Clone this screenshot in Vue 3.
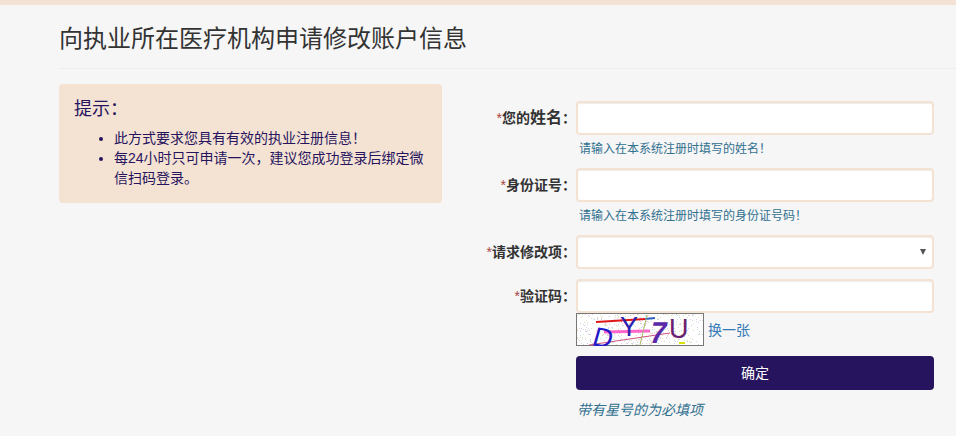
<script setup>
const fields = [
  { label: "您的", big: "姓名", hint: "请输入在本系统注册时填写的姓名！" },
  { label: "身份证号", hint: "请输入在本系统注册时填写的身份证号码！" },
];

// speckle for the captcha background, seeded so each run draws the same
const noiseColors = ["#cfe3c8", "#e6c8e6", "#c8d4ec", "#e8e2b8", "#d8d8d8"];
let seed = 7;
function next(max) {
  seed = (seed * 16807) % 2147483647;
  return seed % max;
}
const noise = Array.from({ length: 420 }, () => ({
  x: next(126),
  y: next(31),
  fill: noiseColors[next(noiseColors.length)],
}));
</script>

<template>
  <div class="page">
    <div class="top-bar"></div>
    <main class="content">
      <h3 class="title">向执业所在医疗机构申请修改账户信息</h3>
      <div class="columns">
        <aside class="tips">
          <h4>提示：</h4>
          <ul>
            <li>此方式要求您具有有效的执业注册信息！</li>
            <li>每24小时只可申请一次，建议您成功登录后绑定微信扫码登录。</li>
          </ul>
        </aside>

        <form class="form" @submit.prevent>
          <div v-for="field in fields" :key="field.hint" class="form-row with-hint">
            <label class="form-label">
              <span class="star">*</span>{{ field.label }}<span v-if="field.big" class="big">{{ field.big }}</span>：
            </label>
            <div class="form-control-wrap">
              <input class="form-control" type="text" />
              <p class="hint">{{ field.hint }}</p>
            </div>
          </div>

          <div class="form-row">
            <label class="form-label"><span class="star">*</span>请求修改项：</label>
            <div class="form-control-wrap select-wrap">
              <select class="form-control"></select>
            </div>
          </div>

          <div class="form-row captcha-row">
            <label class="form-label"><span class="star">*</span>验证码：</label>
            <div class="form-control-wrap">
              <input class="form-control" type="text" />
              <div class="captcha-line">
                <svg class="captcha" width="128" height="33" viewBox="0 0 128 33" aria-label="验证码图片">
                  <rect x="0.5" y="0.5" width="127" height="32" fill="#fff" stroke="#777" />
                  <rect v-for="(dot, i) in noise" :key="i" :x="dot.x + 1" :y="dot.y + 1" width="1" height="1" :fill="dot.fill" />
                  <line x1="20" y1="9" x2="69" y2="6" stroke="#e01818" stroke-width="2" />
                  <line x1="69" y1="6" x2="79" y2="5" stroke="#3060c0" stroke-width="2" />
                  <line x1="28" y1="19" x2="74" y2="18" stroke="#ff66cc" stroke-width="3" />
                  <line x1="13" y1="32" x2="94" y2="20" stroke="#d05080" stroke-width="1" />
                  <line x1="71" y1="2" x2="64" y2="32" stroke="#a8b868" stroke-width="1" />
                  <rect x="103" y="29" width="6" height="2" fill="#d4e400" />
                  <text class="cap-char" x="0" y="0" transform="translate(15 32) rotate(10) skewX(-6)" fill="#2418c8" font-size="27">D</text>
                  <text class="cap-char" x="0" y="0" transform="translate(44 23)" fill="#2c20b0" font-size="27">Y</text>
                  <text class="cap-char bold" x="0" y="0" transform="translate(72 30) skewX(-12)" fill="#5a2aa8" font-size="30">7</text>
                  <text class="cap-char" x="0" y="0" transform="translate(93 25)" fill="#6a2070" font-size="27">U</text>
                </svg>
                <a class="refresh" href="#" @click.prevent>换一张</a>
              </div>
            </div>
          </div>

          <div class="form-row submit-row">
            <div class="form-label"></div>
            <div class="form-control-wrap">
              <button class="submit" type="submit">确定</button>
              <p class="required-note">带有星号的为必填项</p>
            </div>
          </div>
        </form>
      </div>
    </main>
  </div>
</template>

<style>
html,
body {
  margin: 0;
  background: #f6f6f6;
}
</style>

<style scoped>
.page {
  font-family: "Liberation Sans", "Noto Sans CJK SC", sans-serif;
  font-size: 14px;
  line-height: 20px;
  color: #333;
}

.top-bar {
  height: 5px;
  background: #f4e2d6;
}

.content {
  padding: 0 0 0 59px;
}

.title {
  margin: 0;
  padding: 20px 0 16px;
  height: 27px;
  line-height: 27px;
  font-size: 24px;
  font-weight: 400;
  border-bottom: 1px solid #eee;
}

.columns {
  display: flex;
  padding-top: 15px;
}

.tips {
  box-sizing: border-box;
  flex: none;
  align-self: flex-start;
  width: 383px;
  height: 119px;
  padding: 15px;
  background: #f4e2d3;
  border-radius: 4px;
  color: #26145e;
}

.tips h4 {
  margin: 0 0 9px;
  font-size: 18px;
  font-weight: 400;
  line-height: 20px;
}

.tips ul {
  margin: 0;
  padding-left: 40px;
}

.form {
  flex: none;
  width: 492px;
  padding-top: 17px;
}

.form-row {
  display: flex;
  margin-bottom: 10px;
}

.form-label {
  box-sizing: border-box;
  flex: none;
  width: 134px;
  padding: 7px 0 0;
  text-align: right;
  font-weight: 700;
  white-space: nowrap;
}

.star {
  color: #a94442;
  font-weight: 400;
}

.big {
  font-size: 16px;
}

.form-control-wrap {
  flex: none;
  width: 358px;
  margin-left: 0;
}

.form-control {
  display: block;
  box-sizing: border-box;
  width: 100%;
  height: 34px;
  padding: 6px 12px;
  font: inherit;
  background: #fff;
  border: 2px solid #f4e2d3;
  border-radius: 4px;
  outline: none;
  box-shadow: inset 0 1px 1px rgba(0, 0, 0, 0.075);
  appearance: none;
}

.select-wrap {
  position: relative;
}

.select-wrap::after {
  content: "";
  position: absolute;
  top: 14px;
  right: 8px;
  border-style: solid;
  border-width: 6px 3px 0;
  border-color: #555 transparent transparent;
}

.hint {
  margin: 5px 0 0;
  padding-left: 3px;
  height: 18px;
  line-height: 18px;
  font-size: 12px;
  color: #31708f;
}

.captcha-line {
  display: flex;
  align-items: center;
  height: 33px;
}

.captcha {
  display: block;
  flex: none;
}

.cap-char {
  font-family: "Liberation Sans", sans-serif;
}

.cap-char.bold {
  font-weight: 700;
}

.refresh {
  margin-left: 4px;
  color: #337ab7;
  text-decoration: none;
  line-height: 30px;
}

.submit {
  display: block;
  width: 100%;
  height: 34px;
  padding: 0;
  font: inherit;
  color: #fff;
  background: #26145e;
  border: 0;
  border-radius: 4px;
}

.required-note {
  margin: 10px 0 0;
  padding-left: 1px;
  font-style: italic;
  color: #31708f;
}
</style>
